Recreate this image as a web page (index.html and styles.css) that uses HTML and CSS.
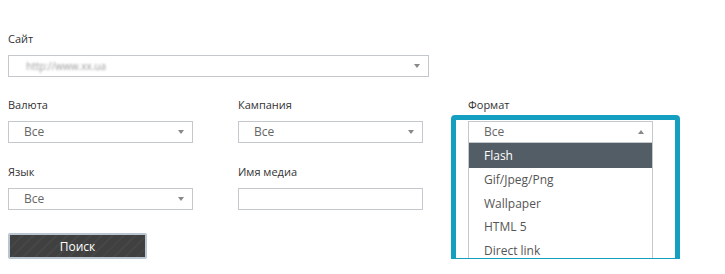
FILE: index.html
```html
<!DOCTYPE html>
<html lang="ru">
<head>
  <meta charset="UTF-8" />
  <title>Фильтр медиа</title>
  <link rel="stylesheet" href="styles.css">
</head>
<body>
  <form class="filters">
    <!-- Site -->
    <div class="field field-site">
      <label>Сайт</label>
      <div class="select select-wide">
        <span class="value blurred">http://www.xx.ua</span>
        <span class="arrow"></span>
      </div>
    </div>

    <div class="row">
      <div class="field">
        <label>Валюта</label>
        <div class="select"><span class="value">Все</span><span class="arrow"></span></div>
      </div>
      <div class="field">
        <label>Кампания</label>
        <div class="select"><span class="value">Все</span><span class="arrow"></span></div>
      </div>
      <!-- Format: open dropdown, highlighted -->
      <div class="field field-format">
        <label>Формат</label>
        <div class="select open"><span class="value">Все</span><span class="arrow up"></span></div>
        <ul class="options">
          <li class="active">Flash</li>
          <li>Gif/Jpeg/Png</li>
          <li>Wallpaper</li>
          <li>HTML 5</li>
          <li>Direct link</li>
        </ul>
        <div class="highlight"></div>
      </div>
    </div>

    <div class="row">
      <div class="field">
        <label>Язык</label>
        <div class="select"><span class="value">Все</span><span class="arrow"></span></div>
      </div>
      <div class="field">
        <label>Имя медиа</label>
        <div class="input"></div>
      </div>
    </div>

    <button type="button" class="btn-search">Поиск</button>
  </form>
</body>
</html>
```

FILE: styles.css
```css
body {
  margin: 0;
  padding: 0;
  background: #fff;
  font-family: "Open Sans", Arial, sans-serif;
  color: #333;
}
.filters {
  padding: 31px 8px 0 8px;
}
.field label {
  display: block;
  font-size: 11px;
  line-height: 15px;
  color: #333;
  margin-bottom: 9px;
}
.row {
  display: grid;
  grid-template-columns: 185px 185px 185px;
  column-gap: 45px;
  margin-top: 20px;
}
.row + .row {
  margin-top: 21px;
}
/* Selects */
.select, .input {
  box-sizing: border-box;
  height: 22px;
  border: 1px solid #c4c8cc;
  background: #fff;
  position: relative;
}
.select-wide {
  width: 421px;
}
.select .value {
  display: block;
  padding-left: 15px;
  font-size: 12px;
  line-height: 20px;
  color: #666;
}
.select .blurred {
  color: #999;
  filter: blur(1.3px);
  font-size: 10px;
  padding-left: 17px;
}
.arrow {
  position: absolute;
  right: 8px;
  top: 8px;
  border-left: 3px solid transparent;
  border-right: 3px solid transparent;
  border-top: 4px solid #888;
}
.arrow.up {
  border-top: 0;
  border-bottom: 4px solid #888;
}
/* Open dropdown */
.field-format {
  position: relative;
}
.options {
  position: absolute;
  left: 0;
  right: 0;
  top: 46px;
  height: 120px;
  overflow: hidden;
  margin: 0;
  padding: 0;
  list-style: none;
  background: #fff;
  border-left: 1px solid #c4c8cc;
  border-right: 1px solid #c4c8cc;
}
.options li {
  height: 23.5px;
  line-height: 23.5px;
  padding-left: 15px;
  font-size: 12px;
  color: #555;
}
.options li.active {
  background: #535d65;
  color: #fff;
  height: 25px;
  line-height: 25px;
}
.highlight {
  position: absolute;
  left: -17px;
  top: 18px;
  width: 229px;
  height: 148px;
  box-sizing: border-box;
  border: 5px solid #149fc0;
  border-radius: 4px;
}
/* Button */
.btn-search {
  margin-top: 23px;
  width: 139px;
  height: 26px;
  border: 2px solid #b9c6d2;
  background: #404040 repeating-linear-gradient(135deg, rgba(255,255,255,0.03) 0 2px, transparent 2px 8px);
  color: #fff;
  font-family: "Open Sans", Arial, sans-serif;
  font-size: 12px;
  font-weight: normal;
  border-radius: 2px;
}
```
